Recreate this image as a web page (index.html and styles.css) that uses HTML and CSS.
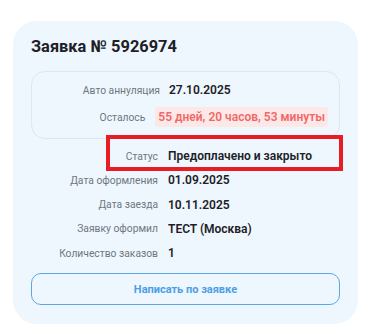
FILE: index.html
```html
<!DOCTYPE html>
<html lang="ru">
<head>
    <meta charset="UTF-8">
    <meta name="viewport" content="width=device-width, initial-scale=1.0">
    <title>Заявка № 5926974</title>
    <link rel="stylesheet" href="styles.css">
</head>
<body>
    <div class="card">
        <h2 class="title">Заявка № 5926974</h2>

        <div class="timer">
            <div class="row">
                <span class="label">Авто аннуляция</span>
                <span class="value">27.10.2025</span>
            </div>
            <div class="row">
                <span class="label">Осталось</span>
                <span class="value chip">55 дней, 20 часов, 53 минуты</span>
            </div>
        </div>

        <div class="info">
            <div class="row marked">
                <span class="label">Статус</span>
                <span class="value">Предоплачено и закрыто</span>
            </div>
            <div class="row">
                <span class="label">Дата оформления</span>
                <span class="value">01.09.2025</span>
            </div>
            <div class="row">
                <span class="label">Дата заезда</span>
                <span class="value">10.11.2025</span>
            </div>
            <div class="row">
                <span class="label">Заявку оформил</span>
                <span class="value">ТЕСТ (Москва)</span>
            </div>
            <div class="row">
                <span class="label">Количество заказов</span>
                <span class="value">1</span>
            </div>
        </div>

        <button class="write-btn">Написать по заявке</button>
    </div>
</body>
</html>
```

FILE: styles.css
```css
* {
    margin: 0;
    padding: 0;
    box-sizing: border-box;
}

body {
    font-family: Roboto, "Noto Sans", sans-serif;
    background-color: #fff;
    color: #1d2126;
}

.card {
    width: 345px;
    margin: 21px 0 0 13px;
    padding: 16px 18px 19px;
    background-color: #eef6fe;
    border-radius: 24px;
}

.title {
    font-size: 16.4px;
    line-height: 20px;
    font-weight: 700;
    margin-bottom: 14px;
}

.timer {
    border: 1px solid #dbe7f4;
    border-radius: 14px;
    padding: 8px 11px 11px;
    display: flex;
    flex-direction: column;
    gap: 7px;
}

.row {
    display: flex;
    align-items: center;
    gap: 10px;
    height: 20px;
}

.label {
    flex: 0 1 117px;
    min-width: 0;
    text-align: right;
    font-size: 10.3px;
    color: #6e767f;
    white-space: nowrap;
}

.timer .row {
    gap: 9px;
}

.value {
    flex: none;
    font-size: 12px;
    font-weight: 600;
    white-space: nowrap;
}

.chip {
    background-color: #fde8e8;
    color: #f06868;
    line-height: 20px;
    padding: 0 3px;
    border-radius: 3px;
}

.timer .row + .row {
    gap: 10px;
}

.info {
    margin-top: 7px;
    display: flex;
    flex-direction: column;
    gap: 4.25px;
}

.info .label {
    flex-basis: 127px;
}

.marked {
    position: relative;
}

.marked::after {
    content: "";
    position: absolute;
    left: 75px;
    right: -3px;
    top: -11px;
    bottom: -5px;
    border: 4px solid #e81c25;
}

.write-btn {
    display: block;
    width: 100%;
    height: 32px;
    margin-top: 10px;
    border: 1.5px solid #58a7ea;
    border-radius: 10px;
    background: transparent;
    color: #4c9fe4;
    font-family: inherit;
    font-size: 11px;
    font-weight: 700;
}
```
